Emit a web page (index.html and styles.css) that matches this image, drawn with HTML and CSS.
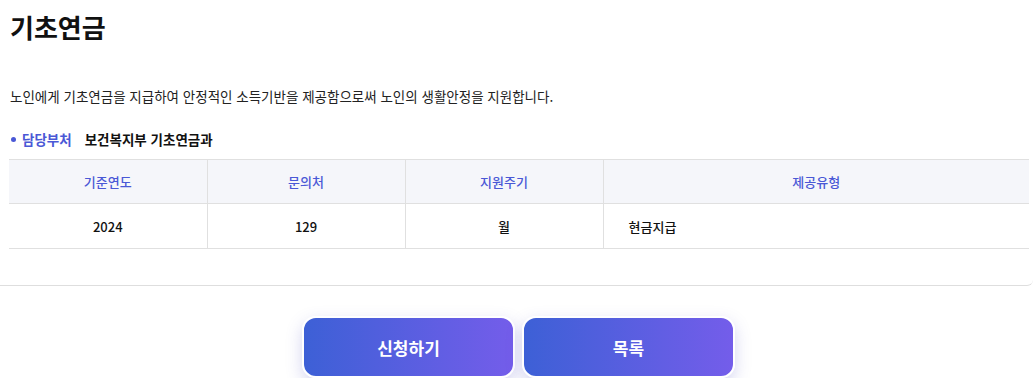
FILE: index.html
```html
<!DOCTYPE html>
<html lang="ko">
<head>
  <meta charset="UTF-8" />
  <meta name="viewport" content="width=device-width, initial-scale=1.0"/>
  <title>기초연금</title>
  <link rel="stylesheet" href="styles.css">
</head>
<body>
  <section class="detail">
    <h1 class="title">기초연금</h1>
    <p class="desc">노인에게 기초연금을 지급하여 안정적인 소득기반을 제공함으로써 노인의 생활안정을 지원합니다.</p>
    <div class="dept">
      <span class="dept-label">담당부처</span>
      <span class="dept-name">보건복지부 기초연금과</span>
    </div>
    <table class="info-table">
      <thead>
        <tr>
          <th class="col-s">기준연도</th>
          <th class="col-s">문의처</th>
          <th class="col-s">지원주기</th>
          <th>제공유형</th>
        </tr>
      </thead>
      <tbody>
        <tr>
          <td>2024</td>
          <td>129</td>
          <td>월</td>
          <td class="left">현금지급</td>
        </tr>
      </tbody>
    </table>
  </section>

  <div class="actions">
    <button class="btn">신청하기</button>
    <button class="btn">목록</button>
  </div>
</body>
</html>
```

FILE: styles.css
```css
* { box-sizing: border-box; margin: 0; padding: 0; }

body {
  font-family: "Noto Sans CJK KR", "Noto Sans", sans-serif;
  background-color: #fff;
  color: #111;
}

.detail {
  padding: 12px 4px 36px 9px;
  border-bottom: 1px solid #dedede;
  border-bottom-right-radius: 6px;
}

.title {
  font-size: 26px;
  font-weight: 700;
  line-height: 30px;
  margin-left: 1px;
}

.desc {
  font-size: 13.5px;
  line-height: 20px;
  margin-top: 44px;
  margin-left: 1px;
  color: #222;
}

.dept {
  display: flex;
  align-items: center;
  margin-top: 23px;
  font-size: 13.5px;
  line-height: 20px;
  font-weight: 700;
}

.dept-label {
  color: #4a58d6;
  position: relative;
  padding-left: 13px;
}

.dept-label::before {
  content: "";
  position: absolute;
  left: 2px;
  top: 8px;
  width: 5px;
  height: 5px;
  border-radius: 50%;
  background: #4a58d6;
}

.dept-name {
  margin-left: 13px;
  color: #111;
}

.info-table {
  width: 1020px;
  margin-top: 10px;
  border-collapse: collapse;
  font-size: 13px;
}

.info-table th,
.info-table td {
  border-top: 1px solid #e0e0e0;
  border-bottom: 1px solid #e0e0e0;
  border-right: 1px solid #e0e0e0;
  text-align: center;
}

.info-table th:last-child,
.info-table td:last-child {
  border-right: none;
}

.info-table th {
  height: 44px;
  background: #f5f6fa;
  color: #4a58d6;
  font-weight: 500;
}

.info-table .col-s {
  width: 198px;
}

.info-table td {
  height: 45px;
  font-weight: 500;
  color: #111;
}

.info-table td.left {
  text-align: left;
  padding-left: 25px;
}

.actions {
  display: flex;
  justify-content: center;
  gap: 7px;
  padding: 30px 0 0 4px;
}

.btn {
  flex: none;
  width: 213px;
  height: 62px;
  border: 2px solid #fff;
  border-radius: 14px;
  background: linear-gradient(90deg, #3d60d6, #745dea);
  color: #fff;
  font-family: inherit;
  font-size: 17px;
  font-weight: 700;
  box-shadow: 0 6px 16px rgba(90, 90, 200, 0.25);
  cursor: pointer;
}
```
